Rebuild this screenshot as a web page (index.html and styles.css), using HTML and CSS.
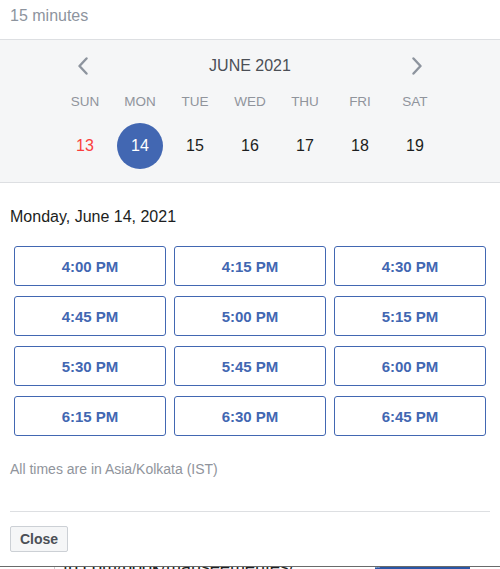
FILE: index.html
```html
<!DOCTYPE html>
<html>
<head>
<meta charset="utf-8">
<link rel="stylesheet" href="styles.css">
</head>
<body>
<div class="dialog">
  <div class="duration">15 minutes</div>
  <div class="calendar">
    <div class="nav">
      <span class="chev"><svg width="12" height="18" viewBox="0 0 12 18"><polyline points="9.5,1.5 2.5,9 9.5,16.5" fill="none" stroke="#8d949e" stroke-width="2.4" stroke-linecap="round" stroke-linejoin="round"/></svg></span>
      <span class="month">JUNE 2021</span>
      <span class="chev"><svg width="12" height="18" viewBox="0 0 12 18"><polyline points="2.5,1.5 9.5,9 2.5,16.5" fill="none" stroke="#8d949e" stroke-width="2.4" stroke-linecap="round" stroke-linejoin="round"/></svg></span>
    </div>
    <div class="week days">
      <span>SUN</span><span>MON</span><span>TUE</span><span>WED</span><span>THU</span><span>FRI</span><span>SAT</span>
    </div>
    <div class="week dates">
      <span class="sun">13</span><span><b class="sel">14</b></span><span>15</span><span>16</span><span>17</span><span>18</span><span>19</span>
    </div>
  </div>
  <div class="selected-date">Monday, June 14, 2021</div>
  <div class="slots">
    <button class="slot">4:00 PM</button>
    <button class="slot">4:15 PM</button>
    <button class="slot">4:30 PM</button>
    <button class="slot">4:45 PM</button>
    <button class="slot">5:00 PM</button>
    <button class="slot">5:15 PM</button>
    <button class="slot">5:30 PM</button>
    <button class="slot">5:45 PM</button>
    <button class="slot">6:00 PM</button>
    <button class="slot">6:15 PM</button>
    <button class="slot">6:30 PM</button>
    <button class="slot">6:45 PM</button>
  </div>
  <div class="tz">All times are in Asia/Kolkata (IST)</div>
  <div class="footer">
    <button class="close">Close</button>
  </div>
</div>
<div class="under">
  <span class="under-side"></span>
  <span class="under-text">fb.com/book/manseemenfes/</span>
  <span class="under-btn">Copy Link</span>
</div>
</body>
</html>
```
FILE: styles.css
```css
* { box-sizing: border-box; }
html, body { margin: 0; padding: 0; background: #fff; }
body {
  width: 500px;
  height: 569px;
  overflow: hidden;
  font-family: "Liberation Sans", Arial, Helvetica, sans-serif;
  color: #1c1e21;
}
.dialog {
  height: 566px;
  background: #fff;
}
.duration {
  height: 39px;
  padding-left: 10px;
  line-height: 32px;
  font-size: 16px;
  color: #8d949e;
}
.calendar {
  background: #f5f6f7;
  border-top: 1px solid #dddfe2;
  border-bottom: 1px solid #dddfe2;
  padding: 12px 0 13px;
}
.nav {
  width: 385px;
  margin: 0 auto;
  height: 28px;
  display: flex;
  align-items: center;
  justify-content: space-between;
}
.chev {
  width: 50px;
  display: flex;
  justify-content: center;
  align-items: center;
}
.month {
  font-size: 16px;
  color: #4b4f56;
}
.week {
  width: 385px;
  margin: 0 auto;
  display: grid;
  grid-template-columns: repeat(7, 55px);
}
.week span {
  display: flex;
  align-items: center;
  justify-content: center;
}
.days span {
  height: 43px;
  font-size: 13.5px;
  color: #90949c;
}
.dates span {
  height: 46px;
  font-size: 16px;
  color: #1c1e21;
}
.dates .sun { color: #fa3e3e; }
.sel {
  width: 46px;
  height: 46px;
  border-radius: 50%;
  background: #4267b2;
  color: #fff;
  font-weight: normal;
  display: flex;
  align-items: center;
  justify-content: center;
}
.selected-date {
  margin-top: 24px;
  padding-left: 10px;
  font-size: 16px;
  line-height: 20px;
  color: #1c1e21;
}
.slots {
  margin-top: 19px;
  padding: 0 14px;
  display: grid;
  grid-template-columns: repeat(3, 152px);
  column-gap: 8px;
  row-gap: 10px;
}
.slot {
  height: 40px;
  margin: 0;
  background: #fff;
  border: 1px solid #4267b2;
  border-radius: 3px;
  font-family: "Liberation Sans", Arial, Helvetica, sans-serif;
  font-size: 15px;
  font-weight: bold;
  color: #4267b2;
  padding: 0;
}
.tz {
  margin-top: 24px;
  padding-left: 10px;
  font-size: 14px;
  line-height: 18px;
  color: #90949c;
}
.footer {
  margin: 33px 10px 0;
  border-top: 1px solid #dddfe2;
  padding-top: 14px;
}
.close {
  height: 26px;
  width: 58px;
  margin: 0;
  padding: 0;
  background: #f5f6f7;
  border: 1px solid #ccd0d5;
  border-radius: 2px;
  font-family: "Liberation Sans", Arial, Helvetica, sans-serif;
  font-size: 14px;
  font-weight: bold;
  color: #4b4f56;
}
.under {
  height: 3px;
  overflow: hidden;
  border-top: 1px solid #6a6a6a;
  display: flex;
  align-items: flex-start;
  background: #fff;
}
.under-side {
  width: 55px;
  height: 3px;
  border-right: 1px solid #ccc;
}
.under-text {
  margin-left: 8px;
  width: 310px;
  font-size: 18px;
  line-height: 14px;
  margin-top: -7px;
  color: #1c1e21;
  white-space: nowrap;
  overflow: hidden;
}
.under-btn {
  margin-left: 2px;
  width: 95px;
  height: 3px;
  background: #2a56a6;
  color: #fff;
  font-size: 1px;
}
```
